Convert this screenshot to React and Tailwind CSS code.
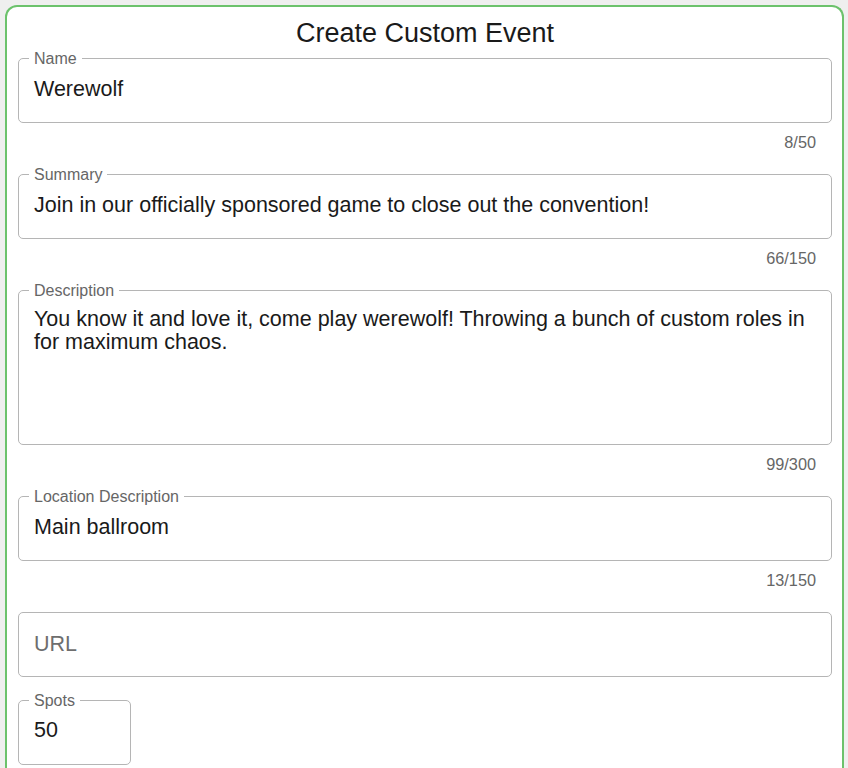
const fields = [
  { label: "Name", value: "Werewolf", count: "8/50" },
  { label: "Summary", value: "Join in our officially sponsored game to close out the convention!", count: "66/150" },
  {
    label: "Description",
    value: "You know it and love it, come play werewolf! Throwing a bunch of custom roles in for maximum chaos.",
    count: "99/300",
    multiline: true,
  },
  { label: "Location Description", value: "Main ballroom", count: "13/150" },
];

function Field({ label, value, count, multiline }) {
  return (
    <div>
      <div
        className={`relative rounded-[5px] border border-[#b5b5b5] px-[15px] ${
          multiline ? "h-[155px] pt-[17px]" : "h-[65px] pt-[19px]"
        }`}
      >
        <span className="absolute left-[10px] top-[-9px] bg-white px-[5px] text-[16px] leading-[18px] text-[#666]">
          {label}
        </span>
        <div className="text-[21.5px] leading-[23px] text-[#1a1a1a]">{value}</div>
      </div>
      <div className="mt-[10px] mb-[23px] pr-[16px] text-right text-[16.3px] leading-[18px] text-[#666]">
        {count}
      </div>
    </div>
  );
}

export default function App() {
  return (
    <div
      className="min-h-screen bg-[#efefef] pt-[5px] pl-[5px] pr-[4px]"
      style={{ fontFamily: '"Liberation Sans", Arial, sans-serif' }}
    >
      <div className="min-h-[800px] rounded-t-[12px] border-2 border-b-0 border-[#6cc26c] bg-white pt-[11px] pl-[11px] pr-[10px]">
        <h1 className="mb-[10px] text-center text-[27px] leading-[30px] text-[#1a1a1a]">
          Create Custom Event
        </h1>

        {fields.map((f) => (
          <Field key={f.label} {...f} />
        ))}

        <div className="mb-[23px] flex h-[65px] items-start rounded-[5px] border border-[#b5b5b5] px-[15px] pt-[20px]">
          <span className="text-[21.5px] leading-[23px] text-[#6e6e6e]">URL</span>
        </div>

        <div className="relative h-[65px] w-[113px] rounded-[5px] border border-[#b5b5b5] px-[15px] pt-[18px]">
          <span className="absolute left-[10px] top-[-9px] bg-white px-[5px] text-[16px] leading-[18px] text-[#666]">
            Spots
          </span>
          <div className="text-[21.5px] leading-[23px] text-[#1a1a1a]">50</div>
        </div>
      </div>
    </div>
  );
}
